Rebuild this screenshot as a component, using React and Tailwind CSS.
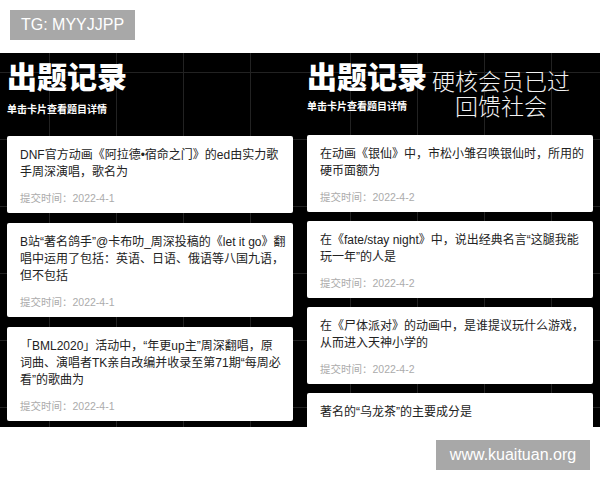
import React from "react";

const leftCards = [
  {
    lines: ["DNF官方动画《阿拉德•宿命之门》的ed由实力歌", "手周深演唱，歌名为"],
    date: "2022-4-1",
  },
  {
    lines: [
      "B站“著名鸽手”@卡布叻_周深投稿的《let it go》翻",
      "唱中运用了包括：英语、日语、俄语等八国九语，",
      "但不包括",
    ],
    date: "2022-4-1",
  },
  {
    lines: [
      "「BML2020」活动中，“年更up主”周深翻唱，原",
      "词曲、演唱者TK亲自改编并收录至第71期“每周必",
      "看”的歌曲为",
    ],
    date: "2022-4-1",
  },
];

const rightCards = [
  {
    lines: ["在动画《银仙》中，市松小雏召唤银仙时，所用的", "硬币面额为"],
    date: "2022-4-2",
  },
  {
    lines: ["在《fate/stay night》中，说出经典名言“这腿我能", "玩一年”的人是"],
    date: "2022-4-2",
  },
  {
    lines: ["在《尸体派对》的动画中，是谁提议玩什么游戏，", "从而进入天神小学的"],
    date: "2022-4-2",
  },
];

function Card({ lines, date }) {
  return (
    <div className="bg-white rounded-[2px] pl-[13px] pt-[11px] pb-[7px] shrink-0">
      <div className="text-[12px] leading-[17px] text-[#222] whitespace-nowrap">
        {lines.map((l, i) => (
          <div key={i}>{l}</div>
        ))}
      </div>
      {date && (
        <div className="mt-[10px] text-[10.5px] leading-[15px] text-[#ababab]">
          提交时间：{date}
        </div>
      )}
    </div>
  );
}

function Heading({ subGap }) {
  return (
    <div className="flex flex-col">
      <div className="text-[30px] leading-[30px] font-black text-white">出题记录</div>
      <div className={`${subGap} text-[10px] leading-[14px] font-bold text-white`}>
        单击卡片查看题目详情
      </div>
    </div>
  );
}

const gridBg =
  "bg-black bg-[linear-gradient(to_right,#222_1px,transparent_1px),linear-gradient(to_bottom,#222_1px,transparent_1px)] bg-[size:67px_67px]";

export default function App() {
  return (
    <div className="w-[600px] h-[480px] bg-white flex flex-col font-['Liberation_Sans','Noto_Sans_CJK_SC',sans-serif]">
      <div className="h-[53px] pt-[10px] pl-[10px]">
        <div className="w-[125px] h-[30px] leading-[30px] text-center text-[16px] bg-[#a8a8a8] text-white">
          TG: MYYJJPP
        </div>
      </div>

      <div className="h-[374px] flex overflow-hidden">
        <div className={`w-[300px] px-[7px] pt-[10px] ${gridBg} bg-[position:49px_19px]`}>
          <Heading subGap="mt-[10px]" />
          <div className="mt-[19px] flex flex-col gap-[10px]">
            {leftCards.map((c, i) => (
              <Card key={i} {...c} />
            ))}
          </div>
        </div>

        <div className={`w-[300px] px-[7px] pt-[10px] ${gridBg} bg-[position:50px_19px]`}>
          <div className="flex items-start">
            <Heading subGap="mt-[7px]" />
            <div className="ml-[5px] mt-[7px] w-[138px] text-center text-[23px] leading-[25px] font-light text-[#f2f2f2]">
              <div>硬核会员已过</div>
              <div>回馈社会</div>
            </div>
          </div>
          <div className="mt-[15px] flex flex-col gap-[9px]">
            {rightCards.map((c, i) => (
              <Card key={i} {...c} />
            ))}
            <div className="h-[78px] bg-white rounded-[2px] pl-[13px] pt-[11px] shrink-0 text-[12px] leading-[17px] text-[#222]">
              著名的“乌龙茶”的主要成分是
            </div>
          </div>
        </div>
      </div>

      <div className="flex justify-end pt-[13px] pr-[10px]">
        <div className="w-[154px] h-[30px] leading-[30px] text-center text-[16px] bg-[#a8a8a8] text-white">
          www.kuaituan.org
        </div>
      </div>
    </div>
  );
}
